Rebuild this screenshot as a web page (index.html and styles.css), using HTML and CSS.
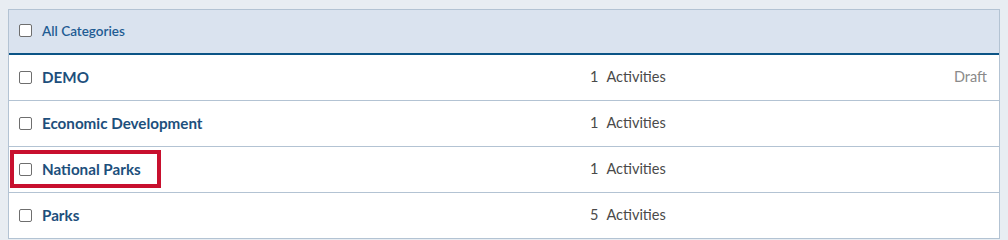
FILE: index.html
```html
<!DOCTYPE html>
<html>
<head>
<meta charset="utf-8">
<link rel="stylesheet" href="styles.css">
</head>
<body>
<div class="table">
  <div class="head">
    <span class="cb"></span>
    <span class="head-label">All Categories</span>
  </div>
  <div class="row">
    <div class="name"><span class="cb"></span><span class="label">DEMO</span></div>
    <div class="count"><span class="num">1</span>Activities</div>
    <div class="status">Draft</div>
  </div>
  <div class="row">
    <div class="name"><span class="cb"></span><span class="label">Economic Development</span></div>
    <div class="count"><span class="num">1</span>Activities</div>
    <div class="status"></div>
  </div>
  <div class="row">
    <div class="name"><span class="cb"></span><span class="label">National Parks</span></div>
    <div class="count"><span class="num">1</span>Activities</div>
    <div class="status"></div>
    <div class="highlight"></div>
  </div>
  <div class="row">
    <div class="name"><span class="cb"></span><span class="label">Parks</span></div>
    <div class="count"><span class="num">5</span>Activities</div>
    <div class="status"></div>
  </div>
</div>
</body>
</html>
```

FILE: styles.css
```css
* { box-sizing: border-box; }
html, body { margin: 0; padding: 0; }
body {
  background: #e8edf2;
  font-family: Lato, "Open Sans", sans-serif;
  padding: 9px 8px 0 8px;
}
.table {
  width: 992px;
  border: 1px solid #b3c3d3;
  border-bottom: none;
  background: #fff;
}
.head {
  height: 45px;
  background: #dae3ef;
  border-bottom: 2px solid #0b5486;
  display: flex;
  align-items: center;
  padding-left: 10px;
  padding-bottom: 2px;
  gap: 10px;
}
.head-label {
  color: #1f5c93;
  font-size: 13.5px;
  font-weight: 600;
}
.cb {
  width: 13px;
  height: 13px;
  border: 1px solid #6e6e6e;
  border-radius: 2px;
  background: #fff;
  flex: none;
}
.row {
  position: relative;
  height: 46px;
  border-bottom: 1px solid #b3c3d3;
  display: grid;
  grid-template-columns: 581px 1fr auto;
  align-items: center;
  padding-bottom: 2px;
}
.name {
  display: flex;
  align-items: center;
  gap: 10px;
  padding-left: 10px;
}
.name .cb { margin-top: 1px; }
.label {
  color: #1d4f7c;
  font-size: 15.2px;
  font-weight: 700;
}
.count {
  color: #4a4a4a;
  font-size: 14.5px;
}
.num { margin-right: 8px; }
.status {
  color: #8a8a8a;
  font-size: 14.5px;
  padding-right: 12px;
}
.highlight {
  position: absolute;
  left: 1px;
  top: 3px;
  width: 151px;
  height: 38px;
  border: 4px solid #c8102e;
}
```
